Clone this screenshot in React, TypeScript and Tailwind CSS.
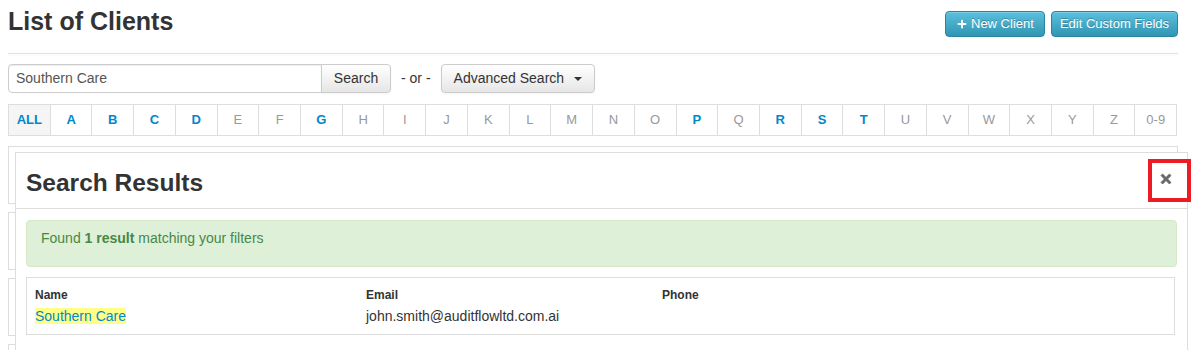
import { FC } from 'react'
import { FaPlus } from 'react-icons/fa'

const letters = ['ALL', 'A', 'B', 'C', 'D', 'E', 'F', 'G', 'H', 'I', 'J', 'K', 'L', 'M', 'N', 'O', 'P', 'Q', 'R', 'S', 'T', 'U', 'V', 'W', 'X', 'Y', 'Z', '0-9']
const active = ['ALL', 'A', 'B', 'C', 'D', 'G', 'P', 'R', 'S', 'T']

const infoBtn =
	'h-[26px] flex items-center rounded-[4px] border border-[#2a85a0] bg-gradient-to-b from-[#5bc0de] to-[#2f96b4] text-white text-[13px] [text-shadow:0_-1px_0_rgba(0,0,0,0.25)] shadow-[inset_0_1px_0_rgba(255,255,255,0.2)]'

const defaultBtn =
	'h-[29px] flex items-center border border-[#ccc] bg-gradient-to-b from-white to-[#e6e6e6] text-[#333] text-[14px] shadow-[inset_0_1px_0_rgba(255,255,255,0.2),0_1px_2px_rgba(0,0,0,0.05)]'

// heavy "remove" cross like the old icon font one
const RemoveIcon: FC = () => (
	<svg width="12" height="12" viewBox="0 0 12 12" className="text-[#666]">
		<path
			d="M1 2.6 L2.6 1 L6 4.4 L9.4 1 L11 2.6 L7.6 6 L11 9.4 L9.4 11 L6 7.6 L2.6 11 L1 9.4 L4.4 6 Z"
			fill="currentColor"
			stroke="currentColor"
			strokeWidth="0.8"
			strokeLinejoin="round"
		/>
	</svg>
)

const App: FC = () => {
	return (
		<div className="relative w-[1193px] h-[350px] overflow-hidden bg-white font-['Liberation_Sans',Arial,sans-serif] text-[#333]">
			<div className="pl-[8px] w-[1178px]">
				{/* header */}
				<div className="flex items-start justify-between pt-[6px]">
					<h1 className="text-[25px] leading-[30px] font-bold text-[#333]">List of Clients</h1>
					<div className="flex gap-[6px] mt-[5px]">
						<button className={`${infoBtn} w-[100px] pl-[11px] gap-[4px]`}>
							<FaPlus className="w-[10px] h-[10px]" />
							New Client
						</button>
						<button className={`${infoBtn} w-[127px] justify-center`}>Edit Custom Fields</button>
					</div>
				</div>
				<div className="mt-[16px] h-px bg-[#e2e2e2] shadow-[0_1px_3px_rgba(0,0,0,0.06)]" />

				{/* search row */}
				<div className="flex items-center mt-[10px]">
					<div className="w-[314px] h-[29px] flex items-center border border-[#ccc] rounded-l-[4px] pl-[7px] text-[14px] text-[#555] shadow-[inset_0_1px_1px_rgba(0,0,0,0.075)]">
						Southern Care
					</div>
					<button className={`${defaultBtn} -ml-px w-[70px] justify-center rounded-r-[4px]`}>Search</button>
					<span className="ml-[10px] text-[14px] text-[#333]">- or -</span>
					<button className={`${defaultBtn} ml-[10px] w-[154px] pl-[12px] rounded-[4px]`}>
						Advanced Search
						<span className="ml-[10px] w-0 h-0 border-x-[4px] border-x-transparent border-t-[4px] border-t-[#333]" />
					</button>
				</div>

				{/* alphabet */}
				<div className="flex mt-[11px] w-[1169px] h-[32px] border border-[#ddd]">
					{letters.map((l, i) => (
						<div
							key={l}
							className={`flex-1 flex items-center justify-center text-[13px] ${i > 0 ? 'border-l border-[#ddd]' : ''} ${
								l === 'ALL' ? 'bg-[#f5f5f5]' : ''
							} ${active.includes(l) ? 'font-bold text-[#0088cc]' : 'text-[#999]'}`}
						>
							{l}
						</div>
					))}
				</div>

				{/* background list (behind modal) */}
				<div className="mt-[10px] flex flex-col gap-[8px] w-[1170px]">
					<div className="h-[58px] border border-[#ddd]" />
					<div className="h-[58px] border border-[#ddd]" />
					<div className="h-[58px] border border-[#ddd]" />
					<div className="h-[58px] border border-[#ddd]" />
				</div>
			</div>

			{/* modal */}
			<div className="absolute left-[15px] top-[152px] w-[1173px] h-[260px] bg-white border border-[#ddd]">
				<div className="h-[56px] flex items-center justify-between pl-[10px] pr-[11px] border-b border-[#ddd]">
					<h2 className="text-[24.5px] font-bold text-[#333] mt-[5px]">Search Results</h2>
					<div className="mr-[4px] -mt-[3px]">
						<RemoveIcon />
					</div>
				</div>
				<div className="px-[10px] pt-[11px]">
					<div className="h-[47px] rounded-[4px] border border-[#d6e9c6] bg-[#dff0d8] pl-[14px] pt-[7px] text-[14px] leading-[20px] text-[#468847]">
						Found <b>1 result</b> matching your filters
					</div>
					<div className="mt-[10px] w-[1149px] h-[58px] border border-[#ddd] px-[8px] pt-[9px]">
						<div className="flex text-[12px] leading-[16px] font-bold text-[#333]">
							<div className="w-[331px]">Name</div>
							<div className="w-[296px]">Email</div>
							<div>Phone</div>
						</div>
						<div className="flex mt-[3px] text-[14px] leading-[20px]">
							<div className="w-[331px]">
								<span className="bg-[#ffff88] text-[#0088cc]">Southern Care</span>
							</div>
							<div className="w-[296px] text-[#333]">john.smith@auditflowltd.com.ai</div>
							<div />
						</div>
					</div>
				</div>
			</div>

			{/* annotation */}
			<div className="absolute left-[1148px] top-[159px] w-[43px] h-[43px] border-[4px] border-[#ed1c24]" />
		</div>
	)
}

export default App
